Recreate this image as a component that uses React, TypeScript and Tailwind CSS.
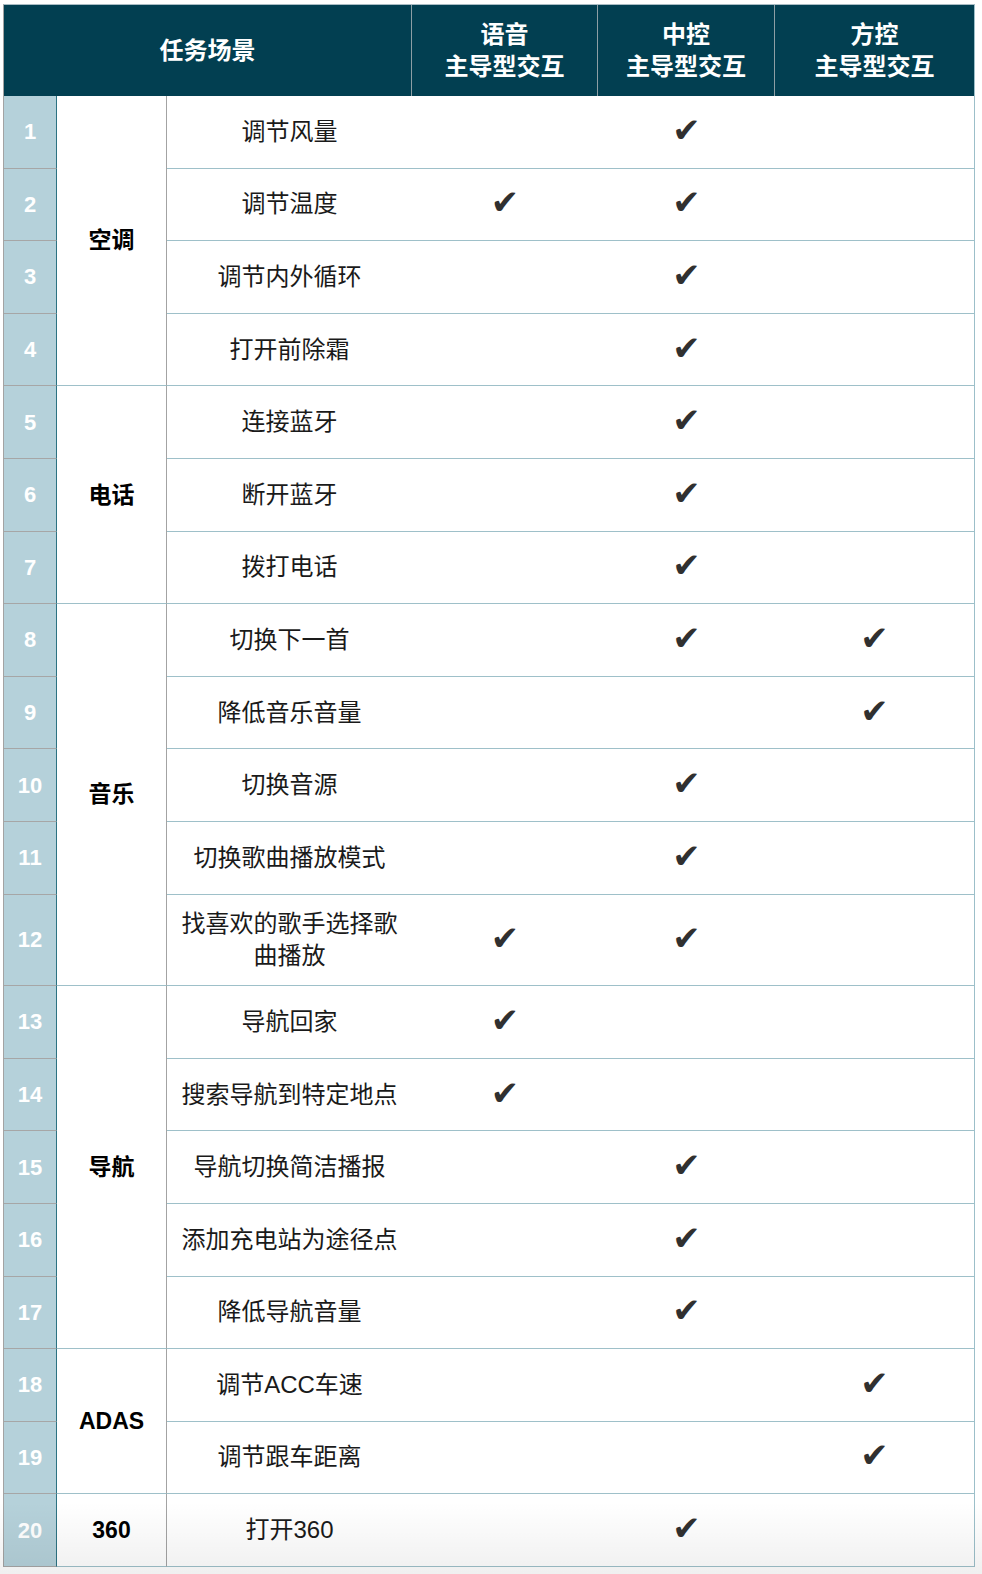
import React from "react";

type Row = [number, string, number, number, number];

const rows: Row[] = [
  [1, "调节风量", 0, 1, 0],
  [2, "调节温度", 1, 1, 0],
  [3, "调节内外循环", 0, 1, 0],
  [4, "打开前除霜", 0, 1, 0],
  [5, "连接蓝牙", 0, 1, 0],
  [6, "断开蓝牙", 0, 1, 0],
  [7, "拨打电话", 0, 1, 0],
  [8, "切换下一首", 0, 1, 1],
  [9, "降低音乐音量", 0, 0, 1],
  [10, "切换音源", 0, 1, 0],
  [11, "切换歌曲播放模式", 0, 1, 0],
  [12, "找喜欢的歌手选择歌曲播放", 1, 1, 0],
  [13, "导航回家", 1, 0, 0],
  [14, "搜索导航到特定地点", 1, 0, 0],
  [15, "导航切换简洁播报", 0, 1, 0],
  [16, "添加充电站为途径点", 0, 1, 0],
  [17, "降低导航音量", 0, 1, 0],
  [18, "调节ACC车速", 0, 0, 1],
  [19, "调节跟车距离", 0, 0, 1],
  [20, "打开360", 0, 1, 0],
];

const categories: Record<number, { label: string; span: string }> = {
  1: { label: "空调", span: "row-span-4" },
  5: { label: "电话", span: "row-span-3" },
  8: { label: "音乐", span: "row-span-5" },
  13: { label: "导航", span: "row-span-5" },
  18: { label: "ADAS", span: "row-span-2" },
  20: { label: "360", span: "row-span-1" },
};

function Check({ on }: { on: number }) {
  return (
    <div className="flex items-center justify-center border-b border-[#9ec0c9]">
      {on ? (
        <span className="mb-[4px] font-['DejaVu_Sans',sans-serif] text-[34px] leading-none text-[#303030]">
          ✔
        </span>
      ) : null}
    </div>
  );
}

export default function App() {
  return (
    <div className="relative w-[982px] h-[1574px] bg-white font-['Liberation_Sans','Noto_Sans_CJK_SC',sans-serif]">
      <div className="pl-[3px] pt-[4px]">
        <div className="grid w-[972px] grid-cols-[53px_110px_245px_186px_177px_199px] grid-rows-[91px_repeat(11,72.6px)_91.6px_repeat(8,72.6px)] border-t border-t-[#a9bcc4] border-l border-l-[#a3a3a3] border-r border-r-[#9cbfc9]">
          <div className="col-span-3 flex items-center justify-center bg-[#023f51] border-r border-r-[#8d9ea4] text-[24px] font-bold text-white">
            任务场景
          </div>
          <div className="flex flex-col items-center justify-center bg-[#023f51] border-r border-r-[#8d9ea4] text-[24px] leading-[32px] font-bold text-white">
            <span>语音</span>
            <span>主导型交互</span>
          </div>
          <div className="flex flex-col items-center justify-center bg-[#023f51] border-r border-r-[#8d9ea4] text-[24px] leading-[32px] font-bold text-white">
            <span>中控</span>
            <span>主导型交互</span>
          </div>
          <div className="flex flex-col items-center justify-center bg-[#023f51] text-[24px] leading-[32px] font-bold text-white">
            <span>方控</span>
            <span>主导型交互</span>
          </div>

          {rows.map(([n, task, v, c, s]) => (
            <React.Fragment key={n}>
              <div className="flex items-center justify-center bg-[#b5d1da] border-r border-r-[#2c7282] border-b border-b-[#a6a6a6] text-[22px] font-bold text-white">
                {n}
              </div>
              {categories[n] ? (
                <div
                  className={`${categories[n].span} flex items-center justify-center border-r border-r-[#a3a3a3] border-b border-b-[#9ec0c9] text-[23px] font-bold text-black`}
                >
                  {categories[n].label}
                </div>
              ) : null}
              <div className="flex items-center justify-center border-b border-[#9ec0c9] px-[14px] text-center text-[24px] leading-[32px] text-[#1a1a1a]">
                {task}
              </div>
              <Check on={v} />
              <Check on={c} />
              <Check on={s} />
            </React.Fragment>
          ))}
        </div>
      </div>
      <div className="pointer-events-none absolute inset-x-0 bottom-0 h-[72px] bg-gradient-to-b from-transparent to-[#000000]/[0.06]" />
    </div>
  );
}
